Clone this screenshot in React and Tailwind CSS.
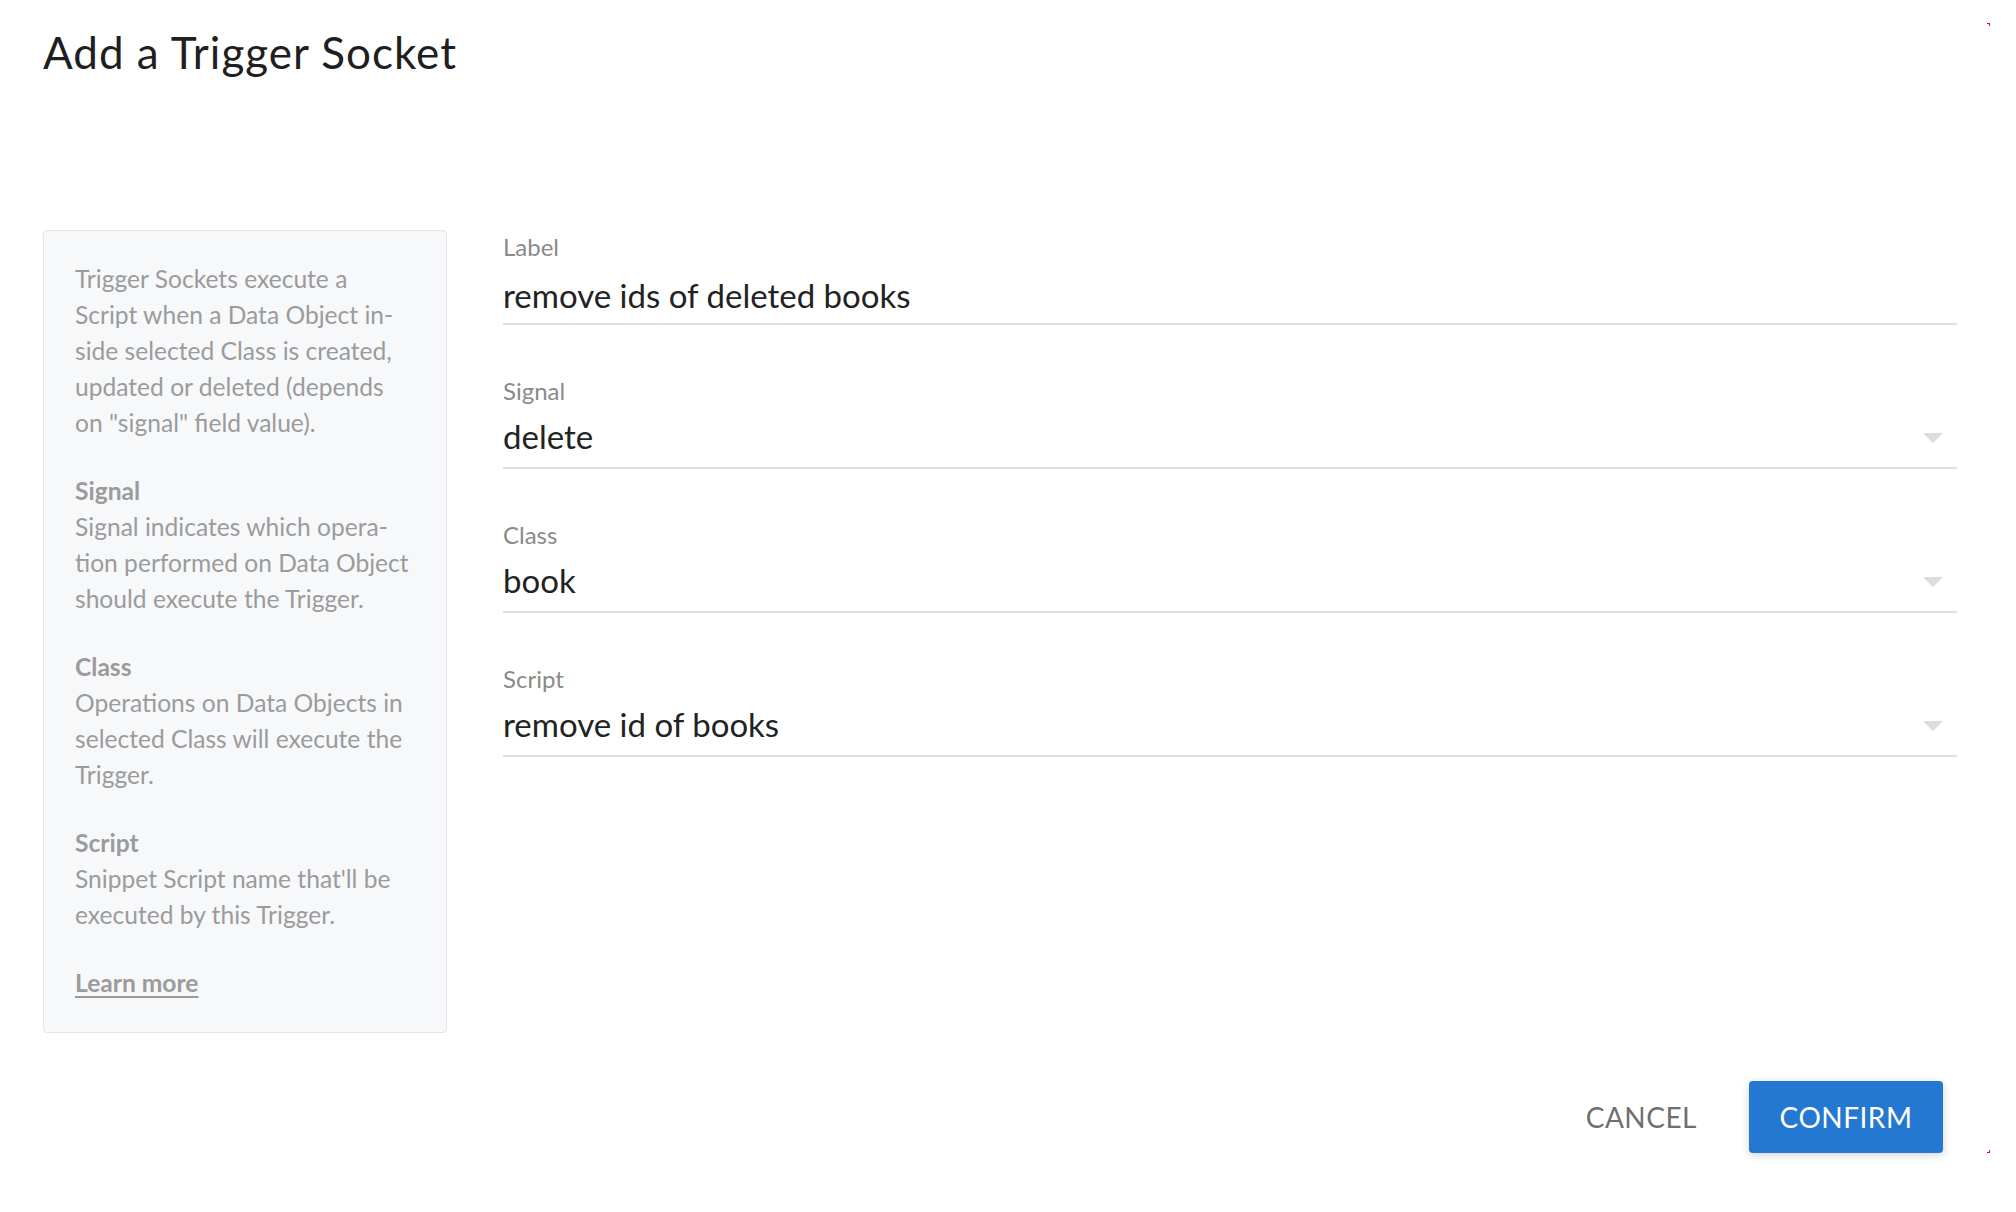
import React from "react";

function Field({ label, value, select }) {
  return (
    <div className="border-b-2 border-[#e0e0e0]">
      <div className="pt-[1px] text-[24px] leading-[28px] text-[#8a8a8a]">{label}</div>
      <div
        className={
          select
            ? "mt-[7px] pb-[7px] flex items-center justify-between pr-[14px]"
            : "mt-[10px] pb-[4px] flex items-center justify-between pr-[14px]"
        }
      >
        <span className="text-[33px] leading-[48px] text-[#222222]">{value}</span>
        {select && (
          <svg width="20" height="10" viewBox="0 0 20 10" className="block translate-y-[2px]">
            <path d="M0 0 L20 0 L10 10 Z" fill="#dcdcdc" />
          </svg>
        )}
      </div>
    </div>
  );
}

function Block({ title, lines, first }) {
  return (
    <div className={first ? "" : "mt-[32px]"}>
      {title && <div className="font-bold">{title}</div>}
      {lines.map((l, i) => (
        <div key={i} className="whitespace-nowrap">{l}</div>
      ))}
    </div>
  );
}

export default function App() {
  return (
    <div className="relative w-[2016px] h-[1212px] bg-white font-[Lato,sans-serif] pl-[43px] pr-[59px] pt-[30px]">
      <h1 className="text-[44px] leading-none tracking-[1px] text-[#1f1f1f] font-normal">Add a Trigger Socket</h1>

      <div className="mt-[156px] flex items-start">
        <div className="w-[404px] shrink-0 rounded-[4px] border border-[#e2e4e8] bg-[#f7f8fa] pt-[30px] pb-[31px] px-[31px] text-[24.6px] leading-[36px] text-[#9b9b9b]">
          <Block
            first
            lines={[
              "Trigger Sockets execute a",
              "Script when a Data Object in-",
              "side selected Class is created,",
              "updated or deleted (depends",
              "on \"signal\" field value).",
            ]}
          />
          <Block
            title="Signal"
            lines={[
              "Signal indicates which opera-",
              "tion performed on Data Object",
              "should execute the Trigger.",
            ]}
          />
          <Block
            title="Class"
            lines={[
              "Operations on Data Objects in",
              "selected Class will execute the",
              "Trigger.",
            ]}
          />
          <Block
            title="Script"
            lines={[
              "Snippet Script name that'll be",
              "executed by this Trigger.",
            ]}
          />
          <div className="mt-[32px]">
            <a className="font-bold underline underline-offset-[4px] text-[#9b9b9b]" href="#">
              Learn more
            </a>
          </div>
        </div>

        <div className="ml-[56px] flex-1 mt-[2px] flex flex-col gap-[51px]">
          <Field label="Label" value="remove ids of deleted books" />
          <Field label="Signal" value="delete" select />
          <Field label="Class" value="book" select />
          <Field label="Script" value="remove id of books" select />
        </div>
      </div>

      <div className="mt-[48px] flex justify-end items-center mr-[14px]">
        <button className="h-[72px] px-[32px] text-[28px] uppercase text-[#6f6f6f] tracking-[0.5px]">
          Cancel
        </button>
        <button className="ml-[20px] h-[72px] w-[194px] rounded-[4px] bg-[#2478d2] text-[28px] uppercase text-white tracking-[0.5px] shadow-[0_2px_8px_rgba(0,0,0,0.18)]">
          Confirm
        </button>
      </div>

      <div className="absolute left-[1987px] top-[23px] w-[3px] h-[3px] border-t border-r border-[#ff0000]" />
      <div className="absolute left-[1987px] top-[1150px] w-[3px] h-[3px] border-b border-r border-[#ff0000]" />
    </div>
  );
}
